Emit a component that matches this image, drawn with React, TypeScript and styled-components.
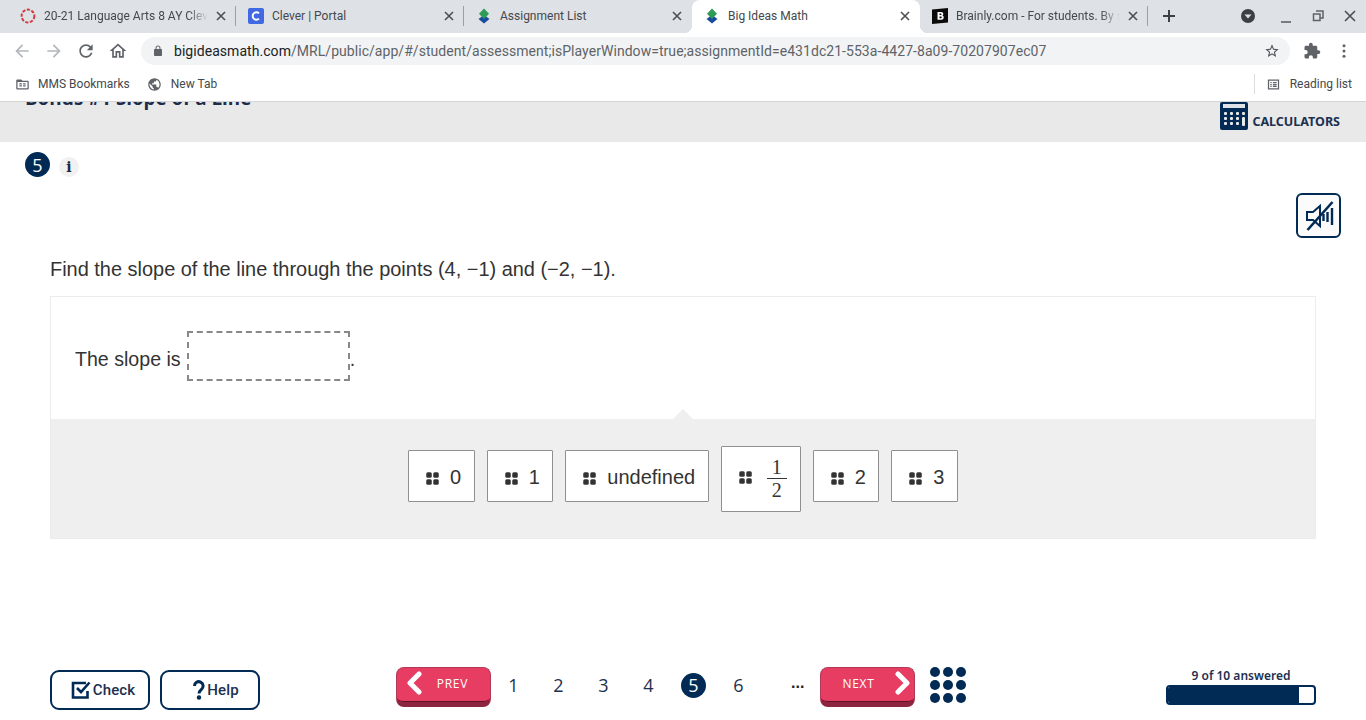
import React from "react";
import styled, { createGlobalStyle, css } from "styled-components";

const navy = "#012a55";

const GlobalStyle = createGlobalStyle`
  html, body {
    margin: 0;
    padding: 0;
    background: #fff;
    overflow: hidden;
  }
  * {
    box-sizing: border-box;
  }
`;

const Page = styled.div`
  width: 1366px;
  height: 720px;
  display: flex;
  flex-direction: column;
  overflow: hidden;
  font-family: "Liberation Sans", Arial, sans-serif;
`;

/* browser chrome */
const TabStrip = styled.div`
  height: 33px;
  flex: none;
  display: flex;
  align-items: stretch;
  padding-left: 8px;
  background: #dee1e6;
`;

const activeTab = css`
  background: #fff;
  border-radius: 8px 8px 0 0;

  &::before,
  &::after {
    content: "";
    position: absolute;
    bottom: 0;
    width: 8px;
    height: 8px;
  }
  &::before {
    left: -8px;
    background: radial-gradient(circle at 0 0, transparent 8px, #fff 8.5px);
  }
  &::after {
    right: -8px;
    background: radial-gradient(circle at 100% 0, transparent 8px, #fff 8.5px);
  }
`;

const tabDivider = css`
  &::after {
    content: "";
    position: absolute;
    right: 0;
    top: 6px;
    height: 20px;
    width: 1px;
    background: #9aa0a6;
  }
`;

const Tab = styled.div<{ $active?: boolean; $divider?: boolean }>`
  position: relative;
  width: 228px;
  flex: none;
  display: flex;
  align-items: center;
  padding: 0 7px 2px 12px;
  ${(p) => p.$active && activeTab}
  ${(p) => p.$divider && tabDivider}
`;

const TabIcon = styled.svg`
  width: 16px;
  height: 16px;
  flex: none;
  margin-right: 8px;
`;

const TabTitle = styled.span<{ $fade?: boolean }>`
  flex: 1;
  min-width: 0;
  margin-right: 5px;
  white-space: nowrap;
  overflow: hidden;
  font: 12px Roboto, sans-serif;
  color: #45484c;
  ${(p) =>
    p.$fade &&
    css`
      mask-image: linear-gradient(to right, #000 88%, transparent 100%);
    `}
`;

const CloseIcon = styled.svg`
  width: 16px;
  height: 16px;
  flex: none;
  fill: none;
  stroke: #4b4e52;
  stroke-width: 1.6;
`;

const NewTab = styled.svg`
  width: 16px;
  height: 16px;
  flex: none;
  margin: 0 64px 2px 13px;
  align-self: center;
  fill: none;
  stroke: #3c4043;
  stroke-width: 2;
`;

const WindowControls = styled.div`
  display: flex;
  align-items: center;
  gap: 16px;
  margin-left: -1px;
  padding-bottom: 2px;
`;

const WindowIcon = styled.svg<{ $lead?: number }>`
  width: 16px;
  height: 16px;
  margin-left: ${(p) => p.$lead ?? 0}px;
`;

const Toolbar = styled.div`
  height: 36px;
  flex: none;
  display: flex;
  align-items: center;
  padding: 0 12px;
  background: #fff;
`;

const ToolIcon = styled.svg<{ $dim?: boolean; $gap?: number; $size?: number; $lead?: number }>`
  width: ${(p) => p.$size ?? 20}px;
  height: ${(p) => p.$size ?? 20}px;
  flex: none;
  margin-left: ${(p) => p.$lead ?? 0}px;
  margin-right: ${(p) => p.$gap ?? 12}px;
  fill: ${(p) => (p.$dim ? "#b4b7bb" : "#5f6368")};
`;

const Omnibox = styled.div`
  width: 1149px;
  height: 28px;
  flex: none;
  display: flex;
  align-items: center;
  padding: 0 10px 0 11px;
  border-radius: 14px;
  background: #f1f3f4;
  font: 14px Roboto, sans-serif;
  letter-spacing: 0.05px;
  color: #5f6368;
  white-space: nowrap;
`;

const LockIcon = styled.svg`
  width: 12px;
  height: 12px;
  flex: none;
  margin-right: 10px;
  fill: #5f6368;
`;

const Host = styled.span`
  color: #202124;
`;

const StarIcon = styled.svg`
  width: 16px;
  height: 16px;
  margin-left: auto;
  fill: #4d5054;
`;

const Bookmarks = styled.div`
  height: 33px;
  flex: none;
  display: flex;
  align-items: center;
  padding: 0 14px 2px 15px;
  background: #fff;
  border-bottom: 1px solid #d4d5d7;
  font: 12px Roboto, sans-serif;
  color: #45484c;
`;

const BookmarkIcon = styled.svg<{ $gap: number }>`
  width: 15px;
  height: 15px;
  flex: none;
  margin-right: ${(p) => p.$gap}px;
  fill: #5f6368;
`;

const Bookmark = styled.span`
  margin-right: 17px;
`;

const ReadingList = styled.div`
  margin-left: auto;
  display: flex;
  align-items: center;
  height: 20px;
  padding-left: 11px;
  border-left: 1px solid #dadce0;
`;

/* page header */
const Banner = styled.div`
  height: 40px;
  flex: none;
  display: flex;
  justify-content: space-between;
  overflow: hidden;
  padding: 0 26px 0 25px;
  background: #e9e9e9;
`;

const LessonTitle = styled.div`
  margin-top: -17px;
  font: bold 18.8px "Open Sans", sans-serif;
  line-height: 26px;
  color: #1d2c4a;
`;

const CalculatorLink = styled.div`
  display: flex;
  align-items: flex-start;
  gap: 4px;
  height: 28px;
  font: bold 12.5px/40px "Noto Sans", sans-serif;
  color: #1c3050;
`;

const CalculatorIcon = styled.svg`
  width: 28px;
  height: 28px;
  flex: none;
`;

const MetaRow = styled.div`
  display: flex;
  align-items: center;
  gap: 10px;
  padding: 10px 0 0 25px;
`;

const NumberBadge = styled.div`
  width: 25px;
  height: 25px;
  border-radius: 50%;
  display: flex;
  align-items: center;
  justify-content: center;
  background: ${navy};
  color: #fff;
  font: 18px "Open Sans", sans-serif;
`;

const InfoBadge = styled.div`
  width: 20px;
  height: 20px;
  margin: 4px 0 0 -1px;
  border-radius: 50%;
  display: flex;
  align-items: center;
  justify-content: center;
  background: #f1f1f1;
  color: #1c2a44;
  font: bold 14px "DejaVu Serif", serif;
`;

const SpeakerRow = styled.div`
  display: flex;
  justify-content: flex-end;
  padding: 16px 25px 0 0;
`;

const SpeakerButton = styled.div`
  width: 45px;
  height: 45px;
  display: flex;
  align-items: center;
  justify-content: center;
  border: 2px solid ${navy};
  border-radius: 6px;
  background: #fbfbfb;
`;

/* question */
const Question = styled.div`
  margin: 19px 50px 0;
  font-size: 19.96px;
  line-height: 24px;
  color: #333;
`;

const Card = styled.div`
  margin: 15px 50px 0;
  height: 243px;
  display: flex;
  flex-direction: column;
  border: 1px solid #ececec;
`;

const PromptArea = styled.div`
  height: 122px;
  flex: none;
  display: flex;
  align-items: center;
  padding: 2px 0 0 24px;
  font-size: 19.6px;
  color: #333;
`;

const DropSlot = styled.span`
  width: 163px;
  height: 50px;
  margin: -7px 0 0 6px;
  flex: none;
  border: 2px dashed #888;
`;

const TokenTray = styled.div`
  position: relative;
  flex: 1;
  display: flex;
  align-items: center;
  justify-content: center;
  gap: 12px;
  background: #efefef;

  &::before {
    content: "";
    position: absolute;
    left: 50%;
    top: -10px;
    border-left: 10px solid transparent;
    border-right: 10px solid transparent;
    border-bottom: 10px solid #efefef;
    transform: translateX(-50%);
  }
`;

const Grip = styled.svg`
  width: 13px;
  height: 13px;
  flex: none;
  fill: #333;
`;

const Token = styled.div<{ $tall?: boolean }>`
  height: ${(p) => (p.$tall ? 66 : 52)}px;
  margin-bottom: ${(p) => (p.$tall ? 0 : 6)}px;
  display: flex;
  align-items: center;
  padding: ${(p) => (p.$tall ? "0 13px 0 17px" : "4px 12.5px 0 17px")};
  gap: 11px;
  border: 1px solid #8f8f8f;
  border-radius: 1px;
  background: #fff;
  font-size: 20px;
  color: #333;

  ${Grip} {
    margin-top: ${(p) => (p.$tall ? -2 : 1)}px;
  }
`;

const Fraction = styled.span`
  display: inline-flex;
  flex-direction: column;
  align-items: center;
  width: 20px;
  margin-left: 4px;
  font: 20px/22px "Liberation Serif", serif;
`;

const Numerator = styled.span`
  width: 100%;
  text-align: center;
  border-bottom: 1px solid #333;
`;

/* footer */
const Footer = styled.div`
  margin-top: auto;
  height: 63px;
  flex: none;
  display: flex;
  padding: 10px 50px 0;
`;

const ActionGroup = styled.div`
  display: flex;
  gap: 10px;
  padding-top: 3px;
  width: 346px;
`;

const ActionButton = styled.div<{ $shift: number }>`
  width: 100px;
  height: 40px;
  display: flex;
  align-items: center;
  justify-content: center;
  gap: 2px;
  padding: 0 0 1px ${(p) => p.$shift}px;
  border: 2px solid ${navy};
  border-radius: 9px;
  background: #fff;
  font: 500 15px Roboto, sans-serif;
  letter-spacing: 0.1px;
  color: #1c3050;
`;

const Pager = styled.div`
  display: flex;
  align-items: flex-start;
`;

const PagerButton = styled.div<{ $next?: boolean }>`
  width: 95px;
  height: 40px;
  display: flex;
  align-items: center;
  justify-content: space-between;
  flex-direction: ${(p) => (p.$next ? "row-reverse" : "row")};
  padding: ${(p) => (p.$next ? "0 3px 4px 22px" : "0 22px 4px 9px")};
  border: 1px solid #b23a58;
  border-bottom: 5px solid #8d2440;
  border-radius: 8px;
  background: #e83d63;
  box-shadow: inset 0 -1px 0 #5e1228;
  color: #fff;
  font: 12px "Open Sans", sans-serif;
  letter-spacing: 0.7px;
`;

const PageNumbers = styled.div`
  display: flex;
  align-items: center;
  height: 36px;
`;

const PageNumber = styled.div<{ $current?: boolean }>`
  width: 45px;
  display: flex;
  justify-content: center;
  font: 18px "Open Sans", sans-serif;
  color: #1c3050;
  ${(p) =>
    p.$current &&
    css`
      & > span {
        width: 25px;
        height: 25px;
        border-radius: 50%;
        background: ${navy};
        color: #fff;
        display: flex;
        align-items: center;
        justify-content: center;
      }
    `}
`;

const Ellipsis = styled.div`
  width: 58.5px;
  padding: 0 0 5px 30px;
  font: bold 16px "Liberation Sans", sans-serif;
  color: #222;
`;

const DotGrid = styled.div`
  display: grid;
  grid-template-columns: repeat(3, 10px);
  gap: 3px;
  margin-left: 15px;
`;

const Dot = styled.span`
  width: 10px;
  height: 10px;
  border-radius: 50%;
  background: ${navy};
`;

const Progress = styled.div`
  margin-left: auto;
  width: 150px;
  padding-top: 1px;
`;

const ProgressLabel = styled.div`
  height: 16px;
  text-align: center;
  font: 600 12px/16px "Noto Sans", sans-serif;
  color: #1c3050;
`;

const ProgressTrack = styled.div`
  height: 20px;
  margin-top: 1px;
  border: 2px solid ${navy};
  border-radius: 4px;
  background: #fff;
  overflow: hidden;
`;

const ProgressFill = styled.div`
  height: 100%;
  background: ${navy};
`;

const Close = () => (
  <CloseIcon viewBox="0 0 16 16">
    <path d="M4 4l8 8M12 4l-8 8" />
  </CloseIcon>
);

const BimIcon = () => (
  <TabIcon viewBox="0 0 16 16">
    <path d="M8 7l5.5 4L8 15.5 2.5 11z" fill="#1a4a9c" />
    <path d="M8 .5l5 5.2-5 5.3-5-5.3z" fill="#2e9b56" />
  </TabIcon>
);

const tabs = [
  {
    title: "20-21 Language Arts 8 AY Clever",
    fade: true,
    divider: true,
    icon: (
      <TabIcon viewBox="0 0 16 16">
        <circle cx="8" cy="8" r="6.4" fill="none" stroke="#d13b3f" strokeWidth="2" strokeDasharray="3.2 1.5" />
      </TabIcon>
    ),
  },
  {
    title: "Clever | Portal",
    divider: true,
    icon: (
      <TabIcon viewBox="0 0 16 16">
        <rect width="16" height="16" rx="2" fill="#4169e1" />
        <path d="M11 5.4A3.7 3.7 0 1 0 11 10.6" fill="none" stroke="#fff" strokeWidth="2" />
      </TabIcon>
    ),
  },
  { title: "Assignment List", icon: <BimIcon /> },
  { title: "Big Ideas Math", active: true, icon: <BimIcon /> },
  {
    title: "Brainly.com - For students. By students.",
    fade: true,
    divider: true,
    icon: (
      <TabIcon viewBox="0 0 16 16">
        <path d="M0 1.5L16 0v14.5L0 16z" fill="#0b0b0b" />
        <path d="M5.5 4h4a2 2 0 0 1 1 3.6 2.2 2.2 0 0 1-1 4.2h-4zM7.5 5.6v1.5h1.3a.75.75 0 0 0 0-1.5zM7.5 8.6v1.6h1.5a.8.8 0 0 0 0-1.6z" fill="#fff" />
      </TabIcon>
    ),
  },
];

const GripIcon = () => (
  <Grip viewBox="0 0 13 13">
    <rect x="0.25" y="0.25" width="5.5" height="5.5" rx="1.5" />
    <rect x="7.25" y="0.25" width="5.5" height="5.5" rx="1.5" />
    <rect x="0.25" y="7.25" width="5.5" height="5.5" rx="1.5" />
    <rect x="7.25" y="7.25" width="5.5" height="5.5" rx="1.5" />
  </Grip>
);

const Chevron = ({ next }: { next?: boolean }) => (
  <svg width="16" height="24" viewBox="0 0 16 24" fill="none">
    <path
      d={next ? "M3 3l9 9-9 9" : "M13 3l-9 9 9 9"}
      stroke="#fff"
      strokeWidth="5"
      strokeLinecap="round"
      strokeLinejoin="round"
    />
  </svg>
);

export default function App() {
  return (
    <Page>
      <GlobalStyle />
      <TabStrip>
        {tabs.map((tab) => (
          <Tab key={tab.title} $active={tab.active} $divider={tab.divider}>
            {tab.icon}
            <TabTitle $fade={tab.fade}>{tab.title}</TabTitle>
            <Close />
          </Tab>
        ))}
        <NewTab viewBox="0 0 16 16">
          <path d="M8 2v12M2 8h12" />
        </NewTab>
        <WindowControls>
          <WindowIcon viewBox="0 0 16 16">
            <circle cx="8" cy="8" r="7" fill="#3c4043" />
            <path d="M4.5 6.5h7L8 10.5z" fill="#dee1e6" />
          </WindowIcon>
          <WindowIcon viewBox="0 0 16 16" $lead={6}>
            <path d="M3 14h10" stroke="#5f6368" strokeWidth="1.6" />
          </WindowIcon>
          <WindowIcon viewBox="0 0 16 16">
            <path d="M6 3h7v7h-2.4M3.5 6h6.5v6.5H3.5z" fill="none" stroke="#5f6368" strokeWidth="1.5" />
          </WindowIcon>
          <WindowIcon viewBox="0 0 16 16">
            <path d="M3 3l10 10M13 3L3 13" stroke="#4b4e52" strokeWidth="1.6" />
          </WindowIcon>
        </WindowControls>
      </TabStrip>

      <Toolbar>
        <ToolIcon viewBox="0 0 24 24" $dim>
          <path d="M20 11H7.83l5.59-5.59L12 4l-8 8 8 8 1.41-1.41L7.83 13H20v-2z" />
        </ToolIcon>
        <ToolIcon viewBox="0 0 24 24" $dim>
          <path d="M12 4l-1.41 1.41L16.17 11H4v2h12.17l-5.58 5.59L12 20l8-8z" />
        </ToolIcon>
        <ToolIcon viewBox="0 0 24 24">
          <path d="M17.65 6.35C16.2 4.9 14.21 4 12 4c-4.42 0-7.99 3.58-7.99 8s3.57 8 7.99 8c3.73 0 6.84-2.55 7.73-6h-2.08c-.82 2.33-3.04 4-5.65 4-3.31 0-6-2.69-6-6s2.69-6 6-6c1.66 0 3.14.69 4.22 1.78L13 11h7V4l-2.35 2.35z" />
        </ToolIcon>
        <ToolIcon viewBox="0 0 24 24" $gap={13}>
          <path d="M12 5.69l5 4.5V18h-2v-6H9v6H7v-7.81l5-4.5M12 3L2 12h3v8h6v-6h2v6h6v-8h3L12 3z" />
        </ToolIcon>
        <Omnibox>
          <LockIcon viewBox="0 0 24 24">
            <path d="M18 8h-1V6c0-2.76-2.24-5-5-5S7 3.24 7 6v2H6c-1.1 0-2 .9-2 2v10c0 1.1.9 2 2 2h12c1.1 0 2-.9 2-2V10c0-1.1-.9-2-2-2zM9 6c0-1.66 1.34-3 3-3s3 1.34 3 3v2H9V6z" />
          </LockIcon>
          <Host>bigideasmath.com</Host>
          /MRL/public/app/#/student/assessment;isPlayerWindow=true;assignmentId=e431dc21-553a-4427-8a09-70207907ec07
          <StarIcon viewBox="0 0 24 24">
            <path d="M22 9.24l-7.19-.62L12 2 9.19 8.63 2 9.24l5.46 4.73L5.82 21 12 17.27 18.18 21l-1.63-7.03L22 9.24zM12 15.4l-3.76 2.27 1-4.28-3.32-2.88 4.38-.38L12 6.1l1.71 4.04 4.38.38-3.32 2.88 1 4.28L12 15.4z" />
          </StarIcon>
        </Omnibox>
        <ToolIcon viewBox="0 0 24 24" $size={18} $lead={13} $gap={14}>
          <path d="M20.5 11H19V7c0-1.1-.9-2-2-2h-4V3.5C13 2.12 11.88 1 10.5 1S8 2.12 8 3.5V5H4c-1.1 0-1.99.9-1.99 2v3.8H3.5c1.49 0 2.7 1.21 2.7 2.7s-1.21 2.7-2.7 2.7H2V20c0 1.1.9 2 2 2h3.8v-1.5c0-1.49 1.21-2.7 2.7-2.7 1.49 0 2.7 1.21 2.7 2.7V22H17c1.1 0 2-.9 2-2v-4h1.5c1.38 0 2.5-1.12 2.5-2.5S21.88 11 20.5 11z" />
        </ToolIcon>
        <ToolIcon viewBox="0 0 24 24" $size={18} $gap={0}>
          <circle cx="12" cy="5" r="2" />
          <circle cx="12" cy="12" r="2" />
          <circle cx="12" cy="19" r="2" />
        </ToolIcon>
      </Toolbar>

      <Bookmarks>
        <BookmarkIcon viewBox="0 0 24 24" $gap={8}>
          <path d="M20 6h-8l-2-2H4c-1.1 0-2 .9-2 2v12c0 1.1.9 2 2 2h16c1.1 0 2-.9 2-2V8c0-1.1-.9-2-2-2zm0 12H4V8h16v10zM7 10h4v2H7zm0 3h4v2H7zm6-3h4v2h-4zm0 3h4v2h-4z" />
        </BookmarkIcon>
        <Bookmark>MMS Bookmarks</Bookmark>
        <BookmarkIcon viewBox="0 0 24 24" $gap={9}>
          <path d="M12 2C6.48 2 2 6.48 2 12s4.48 10 10 10 10-4.48 10-10S17.52 2 12 2zm-1 17.93c-3.95-.49-7-3.85-7-7.93 0-.62.08-1.21.21-1.79L9 15v1c0 1.1.9 2 2 2v1.93zm6.9-2.54c-.26-.81-1-1.39-1.9-1.39h-1v-3c0-.55-.45-1-1-1H8v-2h2c.55 0 1-.45 1-1V7h2c1.1 0 2-.9 2-2v-.41c2.93 1.19 5 4.06 5 7.41 0 2.08-.8 3.97-2.1 5.39z" />
        </BookmarkIcon>
        <Bookmark>New Tab</Bookmark>
        <ReadingList>
          <BookmarkIcon viewBox="0 0 24 24" $gap={9}>
            <path d="M3 4h18v16H3zm2 2v12h14V6zm2 2h2v2H7zm4 0h6v2h-6zM7 11h2v2H7zm4 0h6v2h-6zM7 14h2v2H7zm4 0h6v2h-6z" fillRule="evenodd" />
          </BookmarkIcon>
          Reading list
        </ReadingList>
      </Bookmarks>

      <Banner>
        <LessonTitle>Bonus #1 Slope of a Line</LessonTitle>
        <CalculatorLink>
          <CalculatorIcon viewBox="0 0 28 28">
            <rect width="28" height="28" rx="2" fill={navy} />
            <rect x="3" y="2" width="22" height="4" fill="#dfe3e8" />
            {[10, 15, 20].map((y) =>
              [4, 10, 16].map((x) => (
                <rect key={`${x}-${y}`} x={x} y={y} width="3" height="3" rx="1" fill="#e9e9e9" />
              ))
            )}
            <rect x="22" y="10" width="3" height="3" rx="1" fill="#e9e9e9" />
            <rect x="22" y="15" width="3" height="9" rx="1" fill="#e9e9e9" />
          </CalculatorIcon>
          CALCULATORS
        </CalculatorLink>
      </Banner>

      <MetaRow>
        <NumberBadge>5</NumberBadge>
        <InfoBadge>i</InfoBadge>
      </MetaRow>

      <SpeakerRow>
        <SpeakerButton>
          <svg width="30" height="30" viewBox="0 0 30 30" fill="none" stroke={navy}>
            <path d="M3 11h6l7-6v20l-7-6H3z" strokeWidth="2" />
            <path d="M19.5 13v7M23.5 11v10M28 7v17" strokeWidth="2.4" />
            <path d="M3.5 29L28.500 1" strokeWidth="2.6" />
          </svg>
        </SpeakerButton>
      </SpeakerRow>

      <Question>Find the slope of the line through the points (4, −1) and (−2, −1).</Question>

      <Card>
        <PromptArea>
          The slope is
          <DropSlot />
          <span>.</span>
        </PromptArea>
        <TokenTray>
          <Token>
            <GripIcon />0
          </Token>
          <Token>
            <GripIcon />1
          </Token>
          <Token>
            <GripIcon />
            undefined
          </Token>
          <Token $tall>
            <GripIcon />
            <Fraction>
              <Numerator>1</Numerator>
              <span>2</span>
            </Fraction>
          </Token>
          <Token>
            <GripIcon />2
          </Token>
          <Token>
            <GripIcon />3
          </Token>
        </TokenTray>
      </Card>

      <Footer>
        <ActionGroup>
          <ActionButton $shift={6}>
            <svg width="20" height="20" viewBox="0 0 20 20" fill="none" stroke={navy} strokeWidth="2.6">
              <path d="M16.5 11v6.5H2V3h13" />
              <path d="M6 8l4 4 8.5-9.5" />
            </svg>
            Check
          </ActionButton>
          <ActionButton $shift={12}>
            <svg width="12" height="20" viewBox="0 0 12 20" fill="none" stroke={navy}>
              <path d="M1.5 6a4.300 4.300 0 1 1 7 3.300C7 10.600 6 11.300 6 13.500" strokeWidth="3" />
              <circle cx="6" cy="17.5" r="2.2" fill={navy} stroke="none" />
            </svg>
            Help
          </ActionButton>
        </ActionGroup>

        <Pager>
          <PagerButton>
            <Chevron />
            PREV
          </PagerButton>
          <PageNumbers>
            {[1, 2, 3, 4, 5, 6].map((n) => (
              <PageNumber key={n} $current={n === 5}>
                <span>{n}</span>
              </PageNumber>
            ))}
            <Ellipsis>...</Ellipsis>
          </PageNumbers>
          <PagerButton $next>
            <Chevron next />
            NEXT
          </PagerButton>
          <DotGrid>
            {Array.from({ length: 9 }, (_, i) => (
              <Dot key={i} />
            ))}
          </DotGrid>
        </Pager>

        <Progress>
          <ProgressLabel>9 of 10 answered</ProgressLabel>
          <ProgressTrack>
            <ProgressFill style={{ width: `${(9 / 10) * 100}%` }} />
          </ProgressTrack>
        </Progress>
      </Footer>
    </Page>
  );
}
